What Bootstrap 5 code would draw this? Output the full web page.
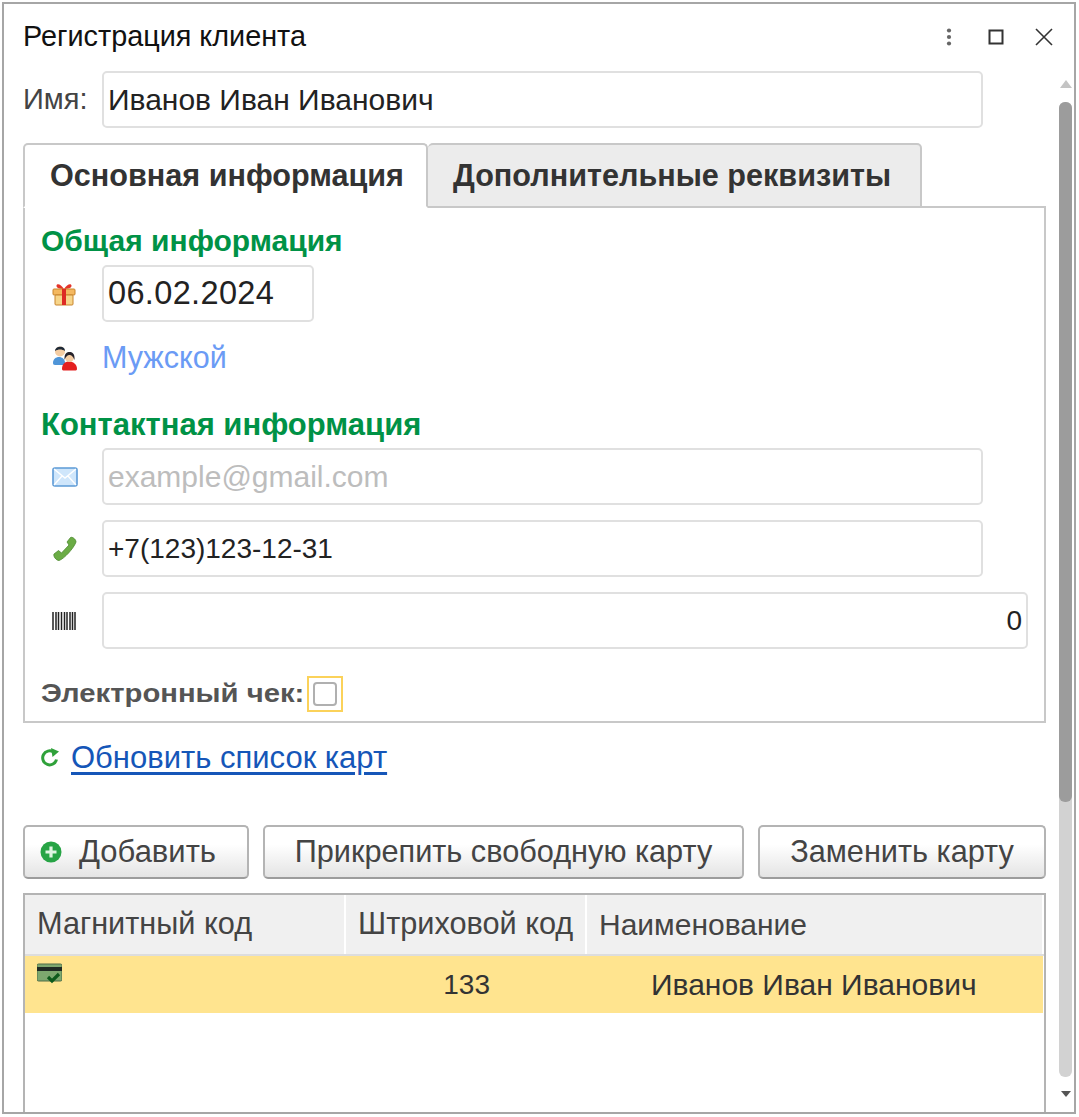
<!DOCTYPE html>
<html lang="ru">
<head>
<meta charset="utf-8">
<title>Регистрация клиента</title>
<link rel="stylesheet" href="https://cdn.jsdelivr.net/npm/bootstrap@5.3.0/dist/css/bootstrap.min.css">
<style>
html,body{margin:0;background:#fff;height:1117px;overflow:hidden}
body{font-family:"Liberation Sans",Arial,sans-serif;color:#333}
.win{margin:2px 0 0 2px;width:1074px;height:1112px;border:2px solid #a6a6a6;overflow:hidden;background:#fff}
.win-head{height:67px;padding:0 21px 2px 19px}
.win-title{font-size:28.8px;color:#111;line-height:1}
.win-btns{gap:31px;color:#444}
.win-body{height:1041px}
.main-col{width:1041px;padding-left:19px}
.lbl{font-size:29px;line-height:1}
.fld.form-control{height:57px;border:2px solid #e0e0e0;border-radius:5px;font-size:30px;color:#222;padding:0 4px;background:#fff;box-shadow:none;font-family:inherit}
.fld::placeholder{color:#bdbdbd;opacity:1}
.fld-date.form-control{font-size:32.5px;letter-spacing:.35px}
.fld-phone.form-control{font-size:28px}
.name-row{height:57px;gap:15px}
.name-row .lbl{width:64px;color:#444}
.w-880{width:881px}
.w-926{width:926px}
.w-212{width:212px}
.tabs-row.nav{margin-top:15px;height:65px;border:0;flex-wrap:nowrap;position:relative;z-index:1}
.tab-item{font-size:30.6px;font-weight:700;color:#333;height:65px;border:2px solid #c8c8c8;border-radius:5px 5px 0 0;display:flex;align-items:center;background:#ececec;white-space:nowrap}
.tab-on{background:#fff;border-bottom-color:#fff;width:405px;padding-left:25px}
.tab-off{width:494px;border-left:0;padding-left:25px;border-bottom-color:#c8c8c8}
.panel-box{width:1023px;height:517px;margin-top:-2px;border:2px solid #c8c8c8;padding:0 16px}
.sec-h{font-size:30px;font-weight:700;color:#009246;line-height:1}
.sec-wide{font-size:31px}
.sec-first{padding-top:18px;height:57px}
.sec-next{height:54px;padding-top:15px}
.frow{height:57px}
.ico-cell{width:61px;padding-left:11px;flex:none}
.gender-row.frow{height:72px}
.gender-link{font-size:30.5px;color:#6b9bf5;text-decoration:none}
.mb-15{margin-bottom:15px}
.check-row{margin-top:26px;gap:4px}
.check-lbl{display:inline-block;width:262px;font-size:25px;font-weight:700;color:#555;white-space:nowrap;transform:scaleX(1.17);transform-origin:left center}
.check-focus{width:36px;height:36px;border:2px solid #fbd25a;display:flex;align-items:center;justify-content:center}
.check-focus .form-check-input{width:24px;height:24px;margin:0;border:2px solid #b0b0b0;border-radius:4px;box-shadow:none;float:none}
.refresh-row{height:70px;padding-left:17px;gap:11px}
.refresh-link{font-size:31px;color:#1556b8;text-decoration:underline;text-underline-offset:4px}
.btn-row{margin-top:32px;height:54px;width:1023px}
.btn-1c.btn{height:54px;border:2px solid #b4b4b4;border-bottom-color:#9c9c9c;border-radius:5px;background:linear-gradient(#fff 35%,#e4e4e4);font-size:30.7px;color:#444;padding:0;display:flex;align-items:center;justify-content:center;white-space:nowrap}
.b-add.btn{width:226px;gap:17px;justify-content:flex-start;padding-left:15px;font-size:31px}
.b-att{width:481px}
.b-rep{width:288px}
.grid-box{margin-top:14px;width:1023px;height:240px;border:2px solid #b4b4b4;border-bottom:0}
.grid-t.table{table-layout:fixed;width:100%;margin:0;border-collapse:collapse;--bs-table-bg:transparent}
.grid-t th{height:60px;background:#f0f0f0;font-weight:400;font-size:30.7px;color:#444;padding:0 0 0 12px;vertical-align:middle;border:0;border-right:2px solid #fff;border-bottom:2px solid #ddd;white-space:nowrap;box-shadow:none}
.grid-t th:last-child{font-size:30px}
.grid-t td{height:58px;background:#ffe48f;font-size:30px;color:#333;border:0;padding:0;vertical-align:middle;white-space:nowrap;box-shadow:none}
.c-code.c-code{text-align:right;padding-right:96px;font-size:28px}
.c-name.c-name{padding-left:65px}
.card-ico{display:block;margin:0 0 22px 12px}
.scroll-col{width:29px;padding-left:14px}
.sc-up,.sc-down{width:14px;display:flex;justify-content:center}
.sc-up{height:31px;padding-top:9px}
.sc-track{width:13px;height:975px;background:#d2d2d2;border-radius:6px}
.sc-thumb{width:13px;height:700px;background:#9c9c9c;border-radius:6px}
.sc-down{padding-top:14px}
</style>
</head>
<body>
<div class="win">
  <div class="win-head d-flex align-items-center justify-content-between">
    <div class="win-title">Регистрация клиента</div>
    <div class="win-btns d-flex align-items-center">
      <svg width="8" height="20" viewBox="0 0 8 20"><circle cx="4" cy="3.5" r="2.1" fill="#666"/><circle cx="4" cy="10" r="2.1" fill="#666"/><circle cx="4" cy="16.5" r="2.1" fill="#666"/></svg>
      <svg width="16" height="16" viewBox="0 0 16 16" class="ms-1"><rect x="1.5" y="1.5" width="13" height="13" fill="none" stroke="#333" stroke-width="2"/></svg>
      <svg width="18" height="18" viewBox="0 0 18 18"><path d="M1 1 17 17M17 1 1 17" stroke="#333" stroke-width="1.6" fill="none"/></svg>
    </div>
  </div>
  <div class="win-body d-flex">
    <div class="main-col">
      <div class="name-row d-flex align-items-center">
        <span class="lbl">Имя:</span>
        <input class="fld form-control w-880" type="text" value="Иванов Иван Иванович">
      </div>
      <div class="tabs-row nav">
        <div class="tab-item tab-on">Основная информация</div>
        <div class="tab-item tab-off">Дополнительные реквизиты</div>
      </div>
      <div class="panel-box">
        <div class="sec-h sec-first">Общая информация</div>
        <div class="frow d-flex align-items-center">
          <div class="ico-cell">
            <svg width="24" height="24" viewBox="0 0 24 24" class="d-block"><path d="M12 7C9 2 5 1 4.500 3.500 4 6 8 7 12 7ZM12 7C15 2 19 1 19.500 3.500 20 6 16 7 12 7Z" fill="#e4342a"/><rect x="1" y="7" width="22" height="6" rx="1" fill="#f4b860" stroke="#c8842c"/><rect x="3" y="13" width="18" height="10" rx="1" fill="#f7d58a" stroke="#c8842c"/><rect x="10" y="7" width="4" height="16" fill="#dd2a25"/></svg>
          </div>
          <input class="fld fld-date form-control w-212" type="text" value="06.02.2024">
        </div>
        <div class="gender-row frow d-flex align-items-center">
          <div class="ico-cell">
            <svg width="26" height="26" viewBox="0 0 26 26" class="d-block"><path d="M1 18C1 14 4 12 7 12 10 12 13 14 13 18V20H3C1.500 20 1 19 1 18Z" fill="#4f95d8"/><circle cx="8" cy="6.500" r="5" fill="#f5cda3"/><path d="M3 6C3 1 13 0 13 6 10 4 6 4 3 6Z" fill="#1e2a38"/><path d="M10 24C10 19 13 16.500 17 16.500 21 16.500 25 19 25 24 25 25 24 25.500 23 25.500H12C11 25.500 10 25 10 24Z" fill="#e42020"/><circle cx="17.500" cy="12.500" r="4.500" fill="#f5cda3"/><path d="M12.500 15C12 8 15 7 17.500 7 20 7 23 8 22.500 15 21 11 19 10 17.500 10 16 10 14 11 12.500 15Z" fill="#26222a"/></svg>
          </div>
          <a class="gender-link" href="#">Мужской</a>
        </div>
        <div class="sec-h sec-wide sec-next">Контактная информация</div>
        <div class="frow d-flex align-items-center mb-15">
          <div class="ico-cell">
            <svg width="26" height="20" viewBox="0 0 26 20" class="d-block"><rect x="1" y="1" width="24" height="18" rx="2" fill="#cfe6fb" stroke="#5c9ad6" stroke-width="1.600"/><path d="M2 2 13 11 24 2M2 18 10 9M24 18 16 9" stroke="#fff" stroke-width="1.400" fill="none"/></svg>
          </div>
          <input class="fld form-control w-880" type="text" placeholder="example@gmail.com">
        </div>
        <div class="frow d-flex align-items-center mb-15">
          <div class="ico-cell">
            <svg width="25" height="25" viewBox="0 0 25 25" class="d-block"><path d="M2 18 6.500 14.500 9.500 17 17 9 15 6 18.500 1.500C20 .5 24 3 24 6 22 12 12 23 7 24.500 4 24.500 1 20 2 18Z" fill="#6bac45" stroke="#4d8a30" stroke-width=".800"/></svg>
          </div>
          <input class="fld fld-phone form-control w-880" type="text" value="+7(123)123-12-31">
        </div>
        <div class="frow d-flex align-items-center">
          <div class="ico-cell">
            <svg width="24" height="18" viewBox="0 0 24 18" class="d-block"><path d="M1 0V18M4 0V18M6.500 0V18M9.500 0V18M12.500 0V18M15 0V18M18 0V18M20.500 0V18M23 0V18" stroke="#222" stroke-width="1.500"/></svg>
          </div>
          <input class="fld fld-phone form-control w-926 text-end" type="text" value="0">
        </div>
        <div class="check-row d-flex align-items-center">
          <span class="check-lbl">Электронный чек:</span>
          <span class="check-focus"><input class="form-check-input" type="checkbox"></span>
        </div>
      </div>
      <div class="refresh-row d-flex align-items-center">
        <svg width="20" height="20" viewBox="0 0 20 20"><path d="M16.500 11.500A7 7 0 1 1 13.500 4" fill="none" stroke="#2fa13a" stroke-width="3"/><path d="M11 0 19 3.500 12.500 9Z" fill="#2fa13a"/></svg>
        <a class="refresh-link" href="#">Обновить список карт</a>
      </div>
      <div class="btn-row d-flex justify-content-between">
        <button class="btn btn-1c b-add" type="button">
          <svg width="22" height="22" viewBox="0 0 22 22"><circle cx="11" cy="11" r="10.500" fill="#27a445"/><path d="M11 5.500V16.500M5.500 11H16.500" stroke="#dff5e2" stroke-width="3.200"/></svg>
          Добавить
        </button>
        <button class="btn btn-1c b-att" type="button">Прикрепить свободную карту</button>
        <button class="btn btn-1c b-rep" type="button">Заменить карту</button>
      </div>
      <div class="grid-box">
        <table class="grid-t table">
          <colgroup><col style="width:320px"><col style="width:241px"><col></colgroup>
          <thead><tr><th>Магнитный код</th><th>Штриховой код</th><th>Наименование</th></tr></thead>
          <tbody><tr>
            <td><svg class="card-ico" width="25" height="22" viewBox="0 0 25 22"><rect x="0" y="1" width="25" height="17" rx="1.500" fill="#7da86f" stroke="#4f6d48"/><rect x="0" y="4" width="25" height="4" fill="#1e2a24"/><path d="M11 14 15 18 22 11" fill="none" stroke="#0e5a1c" stroke-width="3.200"/></svg></td>
            <td class="c-code">133</td>
            <td class="c-name">Иванов Иван Иванович</td>
          </tr></tbody>
        </table>
      </div>
    </div>
    <div class="scroll-col d-flex flex-column">
      <div class="sc-up"><svg width="12" height="8" viewBox="0 0 12 8"><path d="M6 0 12 8H0Z" fill="#c4c4c4"/></svg></div>
      <div class="sc-track"><div class="sc-thumb"></div></div>
      <div class="sc-down"><svg width="10" height="6" viewBox="0 0 10 6"><path d="M0 0H10L5 6Z" fill="#555"/></svg></div>
    </div>
  </div>
</div>
</body>
</html>
